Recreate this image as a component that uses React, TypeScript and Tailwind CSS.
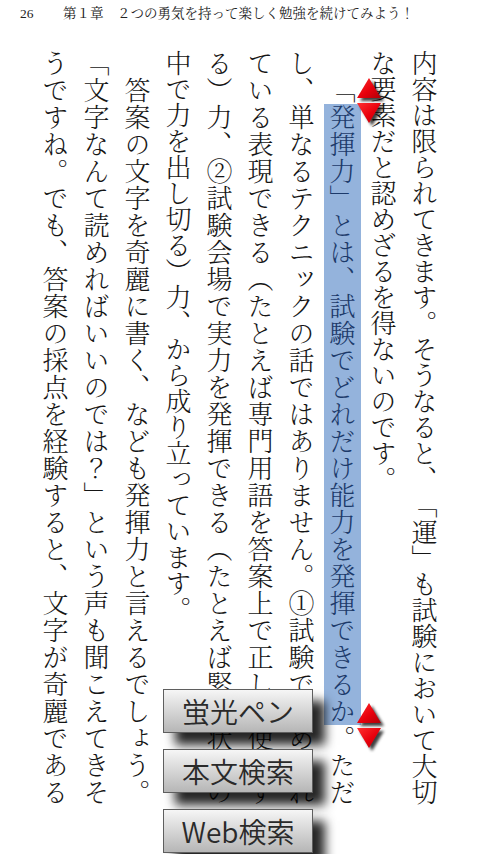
import React from 'react';

interface Column {
  text: string;
  mark?: string;
  after?: string;
  justify?: boolean;
}

const columns: Column[] = [
  {text: '内容は限られてきます。そうなると、「運」も試験において大切', justify: true},
  {text: 'な要素だと認めざるを得ないのです。'},
  {text: '　「', mark: '発揮力」とは、試験でどれだけ能力を発揮できるか', after: '。ただ', justify: true},
  {text: 'し、単なるテクニックの話ではありません。①試験で求められ', justify: true},
  {text: 'ている表現できる（たとえば専門用語を答案上で正しく使用す', justify: true},
  {text: 'る）力、②試験会場で実力を発揮できる（たとえば緊張状態の', justify: true},
  {text: '中で力を出し切る）力、から成り立っています。'},
  {text: '　答案の文字を奇麗に書く、なども発揮力と言えるでしょう。', justify: true},
  {text: '「文字なんて読めればいいのでは？」という声も聞こえてきそ', justify: true},
  {text: 'うですね。でも、答案の採点を経験すると、文字が奇麗である', justify: true},
];

const menu = ['蛍光ペン', '本文検索', 'Web検索'];

function Handle({className}: {className: string}) {
  return (
    <svg className={className} width="32" height="54" viewBox="0 0 32 54">
      <defs>
        <linearGradient id="handle-red" x1="0" y1="0" x2="1" y2="1">
          <stop offset="0" stopColor="#ff3030" />
          <stop offset="0.55" stopColor="#e8000c" />
          <stop offset="1" stopColor="#b00008" />
        </linearGradient>
        <filter id="handle-blur" x="-30%" y="-30%" width="160%" height="160%">
          <feGaussianBlur stdDeviation="1.6" />
        </filter>
      </defs>
      <g transform="translate(3 3)" filter="url(#handle-blur)" fill="#000" opacity="0.75">
        <path d="M12 1 L24 21 L0 21 Z" />
        <path d="M0 26 L24 26 L12 46 Z" />
      </g>
      <path d="M12 1 L24 21 L0 21 Z" fill="url(#handle-red)" />
      <path d="M0 26 L24 26 L12 46 Z" fill="url(#handle-red)" />
    </svg>
  );
}

export default function App() {
  return (
    <div className="relative h-[854px] w-[480px] overflow-hidden bg-white text-[#151515]">
      <header className="flex h-[50px] items-start pt-[6px] pl-[20px] font-['Liberation_Serif','Noto_Serif_CJK_JP','Noto_Sans_CJK_JP',serif] text-[13.5px] leading-[16px] text-[#222]">
        <span className="w-[43px]">26</span>
        <span>第１章　２つの勇気を持って楽しく勉強を続けてみよう！</span>
      </header>

      <div className="ml-[35px] h-[755px] w-[410px] font-['Noto_Serif_CJK_JP','Noto_Sans_CJK_JP_DemiLight','Noto_Sans_CJK_JP_Light','Noto_Sans_CJK_JP',sans-serif] text-[26px] font-light leading-[41px] [text-spacing-trim:space-all] [writing-mode:vertical-rl]">
        {columns.map((col, i) => (
          <div
            key={i}
            className={col.justify ? 'text-justify [text-align-last:justify]' : ''}
          >
            {col.text}
            {col.mark && (
              <span className="bg-[#94b3dc] text-[#1c3a6a]">{col.mark}</span>
            )}
            {col.after}
          </div>
        ))}
      </div>

      <Handle className="absolute left-[357px] top-[77px]" />
      <Handle className="absolute left-[357px] top-[702px]" />

      <div className="absolute left-[163px] top-[689px] flex flex-col gap-[16px]">
        {menu.map(label => (
          <button
            key={label}
            className="flex h-[44px] w-[150px] items-center justify-center border border-[#5e5e5e] bg-gradient-to-b from-[#f6f6f6] to-[#b6b6b6] font-['Noto_Sans_CJK_JP_DemiLight','Noto_Sans_CJK_JP',sans-serif] text-[28px] font-light leading-none text-[#2a2a2a] shadow-[12px_12px_10px_rgba(0,0,0,0.85)]"
          >
            {label}
          </button>
        ))}
      </div>
    </div>
  );
}
